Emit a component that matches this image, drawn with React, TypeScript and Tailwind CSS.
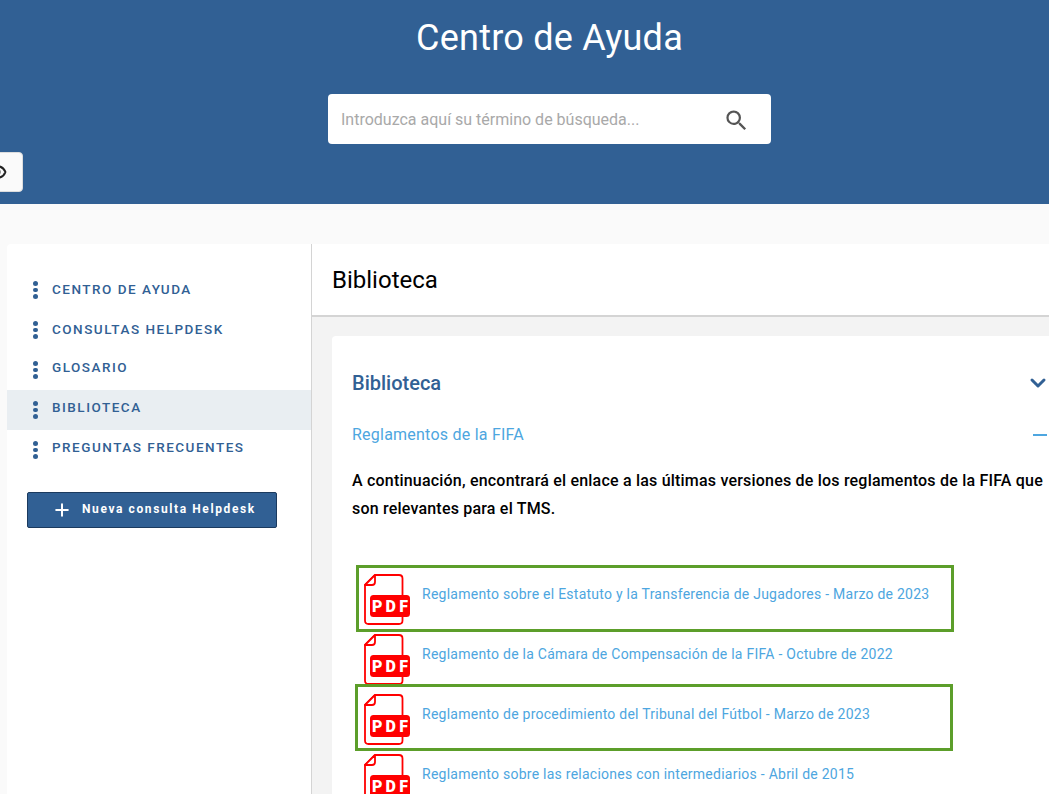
import { Plus, ChevronDown, Eye } from "lucide-react";

const navItems = [
  { label: "CENTRO DE AYUDA", textClass: "-mt-[1px]", active: false },
  { label: "CONSULTAS HELPDESK", textClass: "-mt-[1px]", active: false },
  { label: "GLOSARIO", textClass: "-mt-[5px]", active: false },
  { label: "BIBLIOTECA", textClass: "-mt-[5px]", active: true },
  { label: "PREGUNTAS FRECUENTES", textClass: "-mt-[5px]", active: false },
];

const documents = [
  { title: "Reglamento sobre el Estatuto y la Transferencia de Jugadores - Marzo de 2023", marked: "first" },
  { title: "Reglamento de la Cámara de Compensación de la FIFA - Octubre de 2022", marked: "" },
  { title: "Reglamento de procedimiento del Tribunal del Fútbol - Marzo de 2023", marked: "second" },
  { title: "Reglamento sobre las relaciones con intermediarios - Abril de 2015", marked: "" },
];

const PdfIcon = () => (
  <svg width="46" height="51" viewBox="0 0 46 51" className="shrink-0 mt-[9px]">
    <path
      d="M11 1 H35 Q38.5 1 38.5 4.5 V46.5 Q38.5 50 35 50 H4.5 Q1 50 1 46.5 V11 Z"
      fill="#fff"
      stroke="#f00"
      strokeWidth="1.8"
      strokeLinejoin="round"
    />
    <path d="M11 1 V8 Q11 11 8 11 H1 Z" fill="#fff" stroke="#f00" strokeWidth="1.8" strokeLinejoin="round" />
    <rect x="6" y="21" width="40" height="22" rx="3.5" fill="#f00" />
    <text
      x="8"
      y="38"
      fill="#fff"
      fontFamily="Roboto, sans-serif"
      fontWeight="900"
      fontSize="16"
      letterSpacing="3.2"
    >
      PDF
    </text>
  </svg>
);

export default function App() {
  return (
    <div className="relative w-[1049px] h-[794px] overflow-hidden bg-[#fafafa] font-['Roboto',sans-serif]">
      <header className="relative h-[204px] bg-[#316094] flex flex-col items-center pl-[50px]">
        <h1 className="mt-[15px] text-[36px] leading-[46px] tracking-[0.25px] text-white font-normal">Centro de Ayuda</h1>
        <div className="mt-[33px] w-[443px] h-[50px] bg-white rounded-[4px] flex items-center justify-between pl-[13px] pr-[21px]">
          <span className="mt-[2px] text-[16px] text-[#a9a9a9]">Introduzca aquí su término de búsqueda...</span>
          <svg width="27" height="27" viewBox="0 0 24 24" fill="#555" className="mt-[2px]">
            <path d="M15.5 14h-.79l-.28-.27A6.471 6.471 0 0 0 16 9.5 6.5 6.5 0 1 0 9.5 16c1.61 0 3.09-.59 4.23-1.57l.27.28v.79l5 4.99L20.49 19l-4.99-5zm-6 0C7.01 14 5 11.99 5 9.5S7.01 5 9.5 5 14 7.01 14 9.5 11.99 14 9.5 14z" />
          </svg>
        </div>
        <button className="absolute left-[-30px] top-[152px] w-[53px] h-[40px] bg-[#fafafa] border border-[#ddd] rounded-[4px] flex items-center justify-center">
          <Eye size={20} strokeWidth={2.4} className="text-[#222]" />
        </button>
      </header>

      <div className="flex pt-[40px] pl-[7px]">
        <aside className="w-[305px] h-[560px] shrink-0 bg-white border-r border-[#d4d4d4] rounded-tl-[4px] pt-[26px]">
          <nav className="flex flex-col">
            {navItems.map((item) => (
              <div
                key={item.label}
                className={`h-[40px] flex items-center pl-[26px] ${item.active ? "bg-[#e9eef2]" : ""}`}
              >
                <div className="w-[19px] flex flex-col gap-[2px]">
                  <span className="w-[4.5px] h-[4.5px] rounded-full bg-[#316094]" />
                  <span className="w-[4.5px] h-[4.5px] rounded-full bg-[#316094]" />
                  <span className="w-[4.5px] h-[4.5px] rounded-full bg-[#316094]" />
                </div>
                <span className={`text-[13.5px] font-medium tracking-[1.5px] text-[#316094] ${item.textClass}`}>
                  {item.label}
                </span>
              </div>
            ))}
          </nav>
          <button className="ml-[20px] mt-[22px] w-[250px] h-[36px] bg-[#316094] border border-[#1b3a5e] rounded-[2px] flex items-center pl-[24px]">
            <Plus size={20} strokeWidth={2.4} className="text-white" />
            <span className="ml-[10px] -mt-[2px] text-[12px] font-bold tracking-[1.6px] text-white">Nueva consulta Helpdesk</span>
          </button>
        </aside>

        <main className="flex-1 min-w-0 h-[560px] bg-[#f3f3f3]">
          <div className="h-[73px] bg-white border-b-2 border-[#d4d4d4] flex items-center pl-[20px]">
            <h2 className="text-[24px] font-normal text-black">Biblioteca</h2>
          </div>
          <div className="ml-[20px] mt-[19px] w-[760px] h-[500px] bg-white rounded-[4px] pt-[32px] pl-[20px]">
            <div className="flex items-center justify-between w-[700px] h-[30px]">
              <span className="text-[20px] font-medium text-[#316094]">Biblioteca</span>
              <ChevronDown size={24} strokeWidth={3} className="text-[#316094] mr-[2px]" />
            </div>
            <div className="mt-[25px] flex items-center justify-between w-[695px] h-[24px]">
              <span className="text-[16px] tracking-[0.23px] text-[#4da6e0]">Reglamentos de la FIFA</span>
              <span className="w-[14px] h-[2px] bg-[#4da6e0]" />
            </div>
            <p className="mt-[20px] w-[695px] text-[16px] leading-[28px] tracking-[0.2px] font-medium text-black">
              A continuación, encontrará el enlace a las últimas versiones de los reglamentos de la FIFA que son
              relevantes para el TMS.
            </p>
            <ul className="mt-[42px] flex flex-col">
              {documents.map((doc) => (
                <li key={doc.title} className="relative h-[60px] flex items-center pl-[12px]">
                  <PdfIcon />
                  <a className="ml-[12px] -mt-[2px] text-[14px] tracking-[0.25px] text-[#4da6e0]">{doc.title}</a>
                  {doc.marked === "first" && (
                    <span className="absolute left-[4px] top-0 w-[598px] h-[67px] border-[3px] border-[#5c9e2a]" />
                  )}
                  {doc.marked === "second" && (
                    <span className="absolute left-[3px] top-[-1px] w-[598px] h-[67px] border-[3px] border-[#5c9e2a]" />
                  )}
                </li>
              ))}
            </ul>
          </div>
        </main>
      </div>
    </div>
  );
}
